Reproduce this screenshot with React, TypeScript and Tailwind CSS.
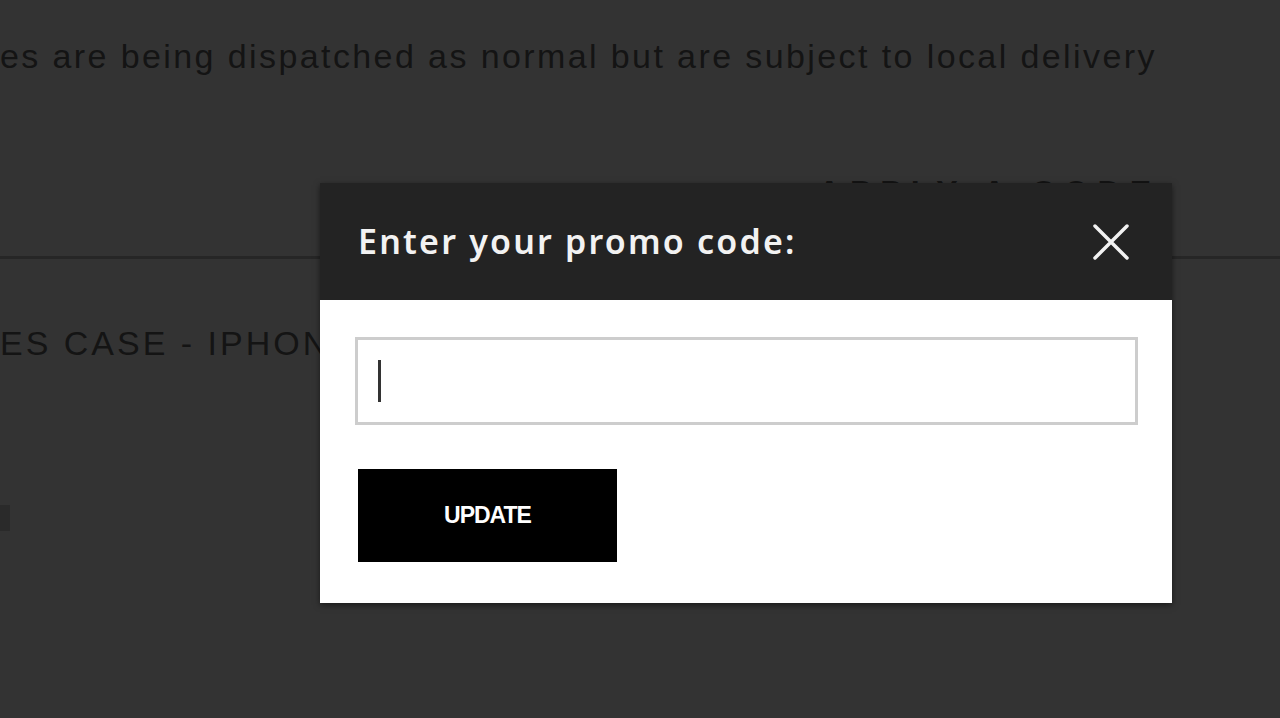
// Promo code dialog over a dimmed basket page
export default function App() {
  return (
    <div className="relative h-[718px] w-[1280px] overflow-hidden bg-[#333333] font-['Liberation_Sans',sans-serif]">
      {/* Dimmed page behind */}
      <div className="flex flex-col">
        <p className="pt-[36px] text-[34px] leading-[40px] tracking-[2.4px] text-[#141414] whitespace-nowrap">
          es are being dispatched as normal but are subject to local delivery
        </p>
        <div className="mt-[96px] flex justify-end pr-[120px]">
          <span className="text-[32px] leading-[40px] font-bold tracking-[9px] text-[#141414]">APPLY A CODE</span>
        </div>
        <div className="mt-[44px] h-[3px] w-full bg-[#262626]" />
        <p className="mt-[64px] text-[34px] leading-[40px] tracking-[3px] text-[#141414] whitespace-nowrap">
          ES CASE - IPHONE 11 PRO MAX
        </p>
        <div className="mt-[142px] h-[26px] w-[10px] bg-[#2a2a2a]" />
      </div>

      {/* Modal */}
      <div className="absolute left-[320px] top-[183px] w-[852px] shadow-[0_2px_6px_rgba(0,0,0,0.5)]">
        <div className="flex h-[117px] items-center justify-between bg-[#232323] pl-[38px] pr-[42px]">
          <h2 className="font-['Noto_Sans',sans-serif] text-[34px] font-semibold tracking-[2.2px] text-[#f2f2f2]">
            Enter your promo code:
          </h2>
          <svg width="38" height="38" viewBox="0 0 38 38" fill="none" stroke="#f2f2f2" strokeWidth="3.5" strokeLinecap="round">
            <path d="M3 3L35 35M35 3L3 35" />
          </svg>
        </div>
        <div className="flex h-[303px] flex-col bg-white px-[35px] pt-[37px]">
          <div className="flex h-[88px] w-[783px] items-center border-[3px] border-[#cdcdcd] pl-[20px]">
            <span className="h-[42px] w-[3px] bg-[#333333]" />
          </div>
          <button className="mt-[44px] ml-[3px] flex h-[93px] w-[259px] items-center justify-center bg-black text-[23px] font-bold tracking-[-1px] text-white">
            UPDATE
          </button>
        </div>
      </div>
    </div>
  );
}
